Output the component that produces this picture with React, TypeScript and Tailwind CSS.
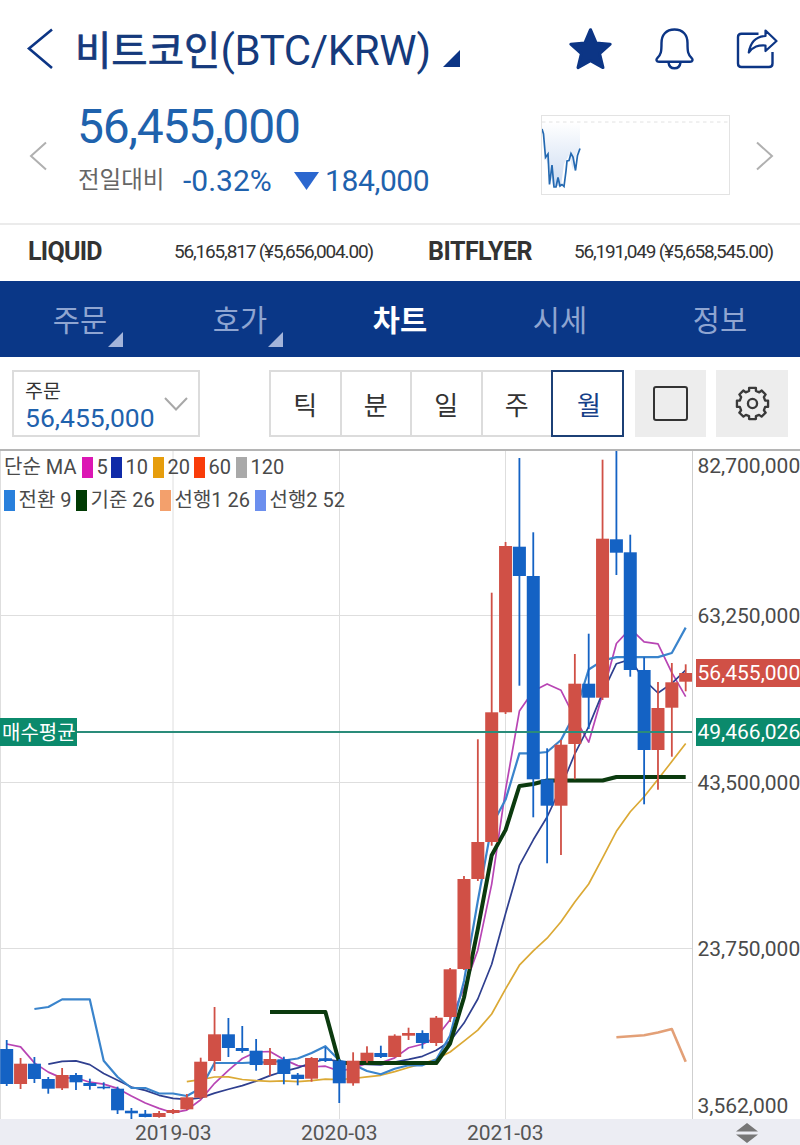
import { clsx } from 'clsx';

type Candle = { top: number; bottom: number; high: number; low: number; up: boolean };

const STEP = 13.857;
const FIRST_X = 6.7;
// months that sit left of the visible range but feed the indicators
const LEAD = 6;

// 1 = up (red), 0 = down (blue): [top, bottom, high, low, up]
const rows: [number, number, number, number, number][] = [
  [1104, 1110, 1090, 1113, 1],
  [1087, 1104, 1070, 1109, 1],
  [1049, 1087, 1040, 1092, 1],
  [999, 1049, 980, 1060, 1],
  [999, 1043, 905, 1060, 0],
  [1043, 1045, 1028, 1060, 0],
  [1049, 1084, 1040, 1086, 0],
  [1063.7, 1084, 1058, 1089, 1],
  [1063.7, 1079, 1057, 1083, 0],
  [1079, 1088.7, 1077, 1093.7, 0],
  [1075, 1088.3, 1068, 1090, 1],
  [1075, 1082.3, 1073, 1090, 0],
  [1083, 1086, 1078.7, 1089.7, 0],
  [1086.7, 1088.3, 1082.3, 1089.3, 0],
  [1088.7, 1110.3, 1086.7, 1114, 0],
  [1110.7, 1113.3, 1108, 1119, 0],
  [1113.7, 1117, 1110, 1117.3, 0],
  [1113, 1117, 1111, 1117.7, 1],
  [1110, 1113, 1109, 1114, 1],
  [1097.3, 1109.3, 1094, 1110, 1],
  [1061.7, 1097.7, 1057.7, 1099, 1],
  [1034.3, 1061, 1007, 1071, 1],
  [1034.3, 1048, 1018, 1057, 0],
  [1048, 1051, 1026, 1052.7, 0],
  [1050.7, 1065, 1039, 1070.7, 0],
  [1059, 1065, 1048, 1075.7, 1],
  [1059.3, 1074, 1056.7, 1084.3, 0],
  [1074.7, 1079, 1073, 1085.3, 0],
  [1058, 1078.7, 1057, 1081.7, 1],
  [1058.3, 1061, 1047.3, 1062, 0],
  [1060.7, 1083.3, 1059, 1103, 0],
  [1060.7, 1083.3, 1052.3, 1085.7, 1],
  [1052.7, 1061, 1046.3, 1062.7, 1],
  [1053, 1057, 1045.7, 1058, 0],
  [1035.7, 1057, 1034.3, 1057.3, 1],
  [1033, 1035.7, 1027.7, 1040, 1],
  [1033, 1043, 1030.3, 1048.7, 0],
  [1017.7, 1043, 1016, 1046, 1],
  [969.3, 1017, 968, 1022, 1],
  [879, 969, 876, 970, 1],
  [842, 879, 739.3, 881, 1],
  [712.3, 842, 592.7, 845.7, 1],
  [546, 712.3, 542, 714, 1],
  [546.7, 576, 458, 685.7, 0],
  [576, 779.3, 532.3, 817.3, 0],
  [779.3, 805.7, 748.3, 863.3, 0],
  [744.7, 805.7, 740, 855, 1],
  [683.7, 744, 654, 779.3, 1],
  [683.7, 697.7, 633.7, 729, 0],
  [538.7, 697.7, 459.7, 700, 1],
  [539.3, 552.7, 451, 575, 0],
  [552.3, 670, 534.7, 676.7, 0],
  [670, 750, 657.3, 804.3, 0],
  [708, 750, 682, 789.7, 1],
  [682.3, 707.7, 663, 756.7, 1],
  [673, 681.7, 664.3, 691.3, 1],
];

const candles: Candle[] = rows.map(([top, bottom, high, low, up]) => ({ top, bottom, high, low, up: up === 1 }));
const xAt = (i: number) => FIRST_X + (i - LEAD) * STEP;

type Point = { i: number; y: number };

function average(n: number): Point[] {
  return candles.flatMap((_, i) => {
    if (i < n - 1) return [];
    const sum = candles.slice(i - n + 1, i + 1).reduce((acc, c) => acc + (c.up ? c.top : c.bottom), 0);
    return [{ i, y: sum / n }];
  });
}

function midpoint(n: number): Point[] {
  return candles.flatMap((_, i) => {
    if (i < n - 1) return [];
    const part = candles.slice(i - n + 1, i + 1);
    return [{ i, y: (Math.min(...part.map((c) => c.high)) + Math.max(...part.map((c) => c.low))) / 2 }];
  });
}

const toPoints = (line: Point[]) =>
  line
    .filter((p) => p.i >= LEAD && p.i < candles.length)
    .map((p) => `${xAt(p.i).toFixed(1)},${p.y.toFixed(1)}`)
    .join(' ');

const conversion = midpoint(9);
const base = midpoint(26);
const leading = base.map((p) => ({
  i: p.i + 25,
  y: (p.y + (conversion.find((c) => c.i === p.i)?.y ?? p.y)) / 2,
}));

const lines = [
  { points: toPoints(average(5)), color: '#b845b4', width: 1.7 },
  { points: toPoints(average(10)), color: '#2f3f8f', width: 1.7 },
  { points: toPoints(average(20)), color: '#dba935', width: 1.7 },
  { points: toPoints(conversion), color: '#3a84cc', width: 2.2 },
  { points: toPoints(base), color: '#0b3a0e', width: 4 },
  { points: toPoints(leading), color: '#e3a077', width: 2.6 },
];

const averages = [
  { label: '5', color: 'bg-[#dc17b4]', width: 'w-[29px]' },
  { label: '10', color: 'bg-[#0f2aa8]', width: 'w-[42px]' },
  { label: '20', color: 'bg-[#e69d0c]', width: 'w-[41px]' },
  { label: '60', color: 'bg-[#f93c09]', width: 'w-[42px]' },
  { label: '120', color: 'bg-[#a9a9a9]', width: 'w-[52px]' },
];

const ichimoku = [
  { label: '전환 9', color: 'bg-[#2980dc]', width: 'w-[72px]' },
  { label: '기준 26', color: 'bg-[#003a03]', width: 'w-[84px]' },
  { label: '선행1 26', color: 'bg-[#f3a06c]', width: 'w-[95px]' },
  { label: '선행2 52', color: 'bg-[#6c8fee]', width: 'w-[92px]' },
];

const tabs = [
  { label: '주문', more: true },
  { label: '호가', more: true },
  { label: '차트', active: true },
  { label: '시세' },
  { label: '정보' },
];

const FONT = "font-[Roboto,'Noto_Sans_CJK_KR',sans-serif]";

function Header() {
  return (
    <header className="flex h-[98px] items-center text-[#0c3585]">
      <svg className="ml-[26px] h-[44px] w-[28px]" viewBox="0 0 28 44" fill="none" stroke="currentColor" strokeWidth="2.6">
        <path d="M26 2.5 3 21.5 26 41" />
      </svg>
      <h1 className="ml-[21px] flex w-[356px] items-center whitespace-nowrap pt-[3px] text-[#153a7c]">
        <span className="pt-[3px] text-[39.500px] leading-none [-webkit-text-stroke:0.7px]">비트코인</span>
        <span className="text-[42px] leading-none tracking-[-0.35px]">(BTC/KRW)</span>
      </h1>
      <svg className="ml-[11px] mt-[19px] size-[18px]" viewBox="0 0 18 18" fill="currentColor">
        <path d="M18 0V17H1Z" />
      </svg>
      <svg className="ml-[107px] h-[44px] w-[46px]" viewBox="0 0 46 44" fill="currentColor" stroke="currentColor" strokeWidth="3" strokeLinejoin="round">
        <path d="M23.5 2.7 29.2 16 43.2 17.2 32.6 26.5 36 40.6 23.5 33.6 11 40.6 14.4 26.5 3.8 17.2 17.8 16Z" />
      </svg>
      <svg className="ml-[41px] h-[44px] w-[42px]" viewBox="0 0 42 44" fill="none" stroke="currentColor" strokeWidth="2.4" strokeLinejoin="round">
        <path d="M20.500 2.500C12 2.500 7.500 8 7.500 16C7.500 25 7 27.500 3.500 30.800C1.500 32.700 2.500 34.800 5 34.800H36C38.500 34.800 39.500 32.700 37.500 30.800C34 27.500 33.500 25 33.500 16C33.500 8 29 2.500 20.500 2.500Z" />
        <path d="M14.500 35.500C15 39.500 17.500 41.300 20.500 41.300S26 39.500 26.500 35.500" />
      </svg>
      <svg className="ml-[37px] h-[44px] w-[46px]" viewBox="0 0 46 44" fill="none" stroke="currentColor" strokeWidth="2.4" strokeLinejoin="round">
        <path d="M25.500 6.700H8.500Q5 6.700 5 10V36.500Q5 40 8.500 40H36Q39.500 40 39.500 36.500V25" />
        <path d="M15.800 25.500C17.500 14.500 23 9.500 32.500 9V3.500L43.500 14 32.500 24V18.500C25 18 20.500 19.500 15.800 25.500Z" strokeWidth="2.2" />
      </svg>
    </header>
  );
}

function Price() {
  return (
    <section className="flex h-[125px] text-[#1f62ad]">
      <svg className="ml-[29px] mt-[43px] h-[30px] w-[18px]" viewBox="0 0 18 30" fill="none" stroke="#b0b0b0" strokeWidth="2">
        <path d="M17 1.500 2 15 17 28.500" />
      </svg>
      <div className="ml-[30px] w-[464px] pt-[4px]">
        <div className="text-[48px] leading-[50px] tracking-[-1.2px]">56,455,000</div>
        <div className="mt-[12px] flex h-[34px] items-center whitespace-nowrap">
          <span className="w-[105px] pl-px text-[23.500px] leading-none text-[#666]">전일대비</span>
          <span className="w-[112px] pl-px text-[30px] leading-none">-0.32%</span>
          <svg className="mr-[6px] h-[18px] w-[25px]" viewBox="0 0 25 18" fill="#2b67cf">
            <path d="M0 0H25L12.500 18Z" />
          </svg>
          <span className="text-[30px] leading-none tracking-[-0.4px]">184,000</span>
        </div>
      </div>
      <svg className="mt-[17px] h-[80px] w-[189px]" viewBox="0 0 189 80" fill="none">
        <defs>
          <linearGradient id="spark" x1="0" y1="0" x2="0" y2="1">
            <stop offset="0" stopColor="#ffffff" />
            <stop offset="1" stopColor="#cddcf2" />
          </linearGradient>
        </defs>
        <path d="M1 7H39V33L35 39 32 55 28 40 23 49 20 71H12L8 52 5 44 3 20 1 14Z" fill="url(#spark)" />
        <path d="M1 7H188" stroke="#e2e2e2" strokeDasharray="3.500 3.500" />
        <path d="M1 14 2.500 19 4.500 42.500 7 39 8.500 69.500 11 50 13 72 15 72 17 62.500 19 71 21 69.500 23 71.500 25 56 26 46 28 45.500 30 38.500 32 42 34.500 55.500 36.500 40.500 39 33.500" stroke="#2469b1" strokeWidth="1.700" />
        <rect x=".5" y=".5" width="188" height="79" stroke="#e3e3e3" />
      </svg>
      <svg className="ml-[26px] mt-[43px] h-[30px] w-[18px]" viewBox="0 0 18 30" fill="none" stroke="#b0b0b0" strokeWidth="2">
        <path d="M1 1.500 16 15 1 28.500" />
      </svg>
    </section>
  );
}

function Exchanges() {
  return (
    <section className="flex h-[58px] items-center whitespace-nowrap border-t-2 border-[#ebebeb] pb-[3px] pl-[28px] text-[#333]">
      <span className="w-[146px] text-[25px] font-bold leading-none tracking-[-0.7px]">LIQUID</span>
      <span className="w-[254px] text-[19px] leading-none tracking-[-1.17px]">56,165,817 (¥5,656,004.00)</span>
      <span className="w-[146px] text-[25px] font-bold leading-none tracking-[-0.5px]">BITFLYER</span>
      <span className="text-[19px] leading-none tracking-[-1.17px]">56,191,049 (¥5,658,545.00)</span>
    </section>
  );
}

function Tabs() {
  return (
    <nav className="grid h-[76px] grid-cols-5 bg-[#0a3787]">
      {tabs.map((tab) => (
        <div
          key={tab.label}
          className={clsx(
            'relative flex items-center justify-center pt-[5px] text-[29.500px] leading-none',
            tab.active ? 'font-bold text-white' : 'text-[#8fa5d1]',
          )}
        >
          {tab.label}
          {tab.more && (
            <svg className="absolute bottom-[10px] left-[108px] size-[15px]" viewBox="0 0 15 15" fill="#a3b4da">
              <path d="M15 0V15H0Z" />
            </svg>
          )}
        </div>
      ))}
    </nav>
  );
}

function Toolbar() {
  return (
    <section className="flex h-[92px] pl-[12px] pt-[13px]">
      <div className="flex h-[67px] w-[188px] items-center justify-between border-2 border-[#dcdcdc] pl-[11px] pr-[10px] pt-[3px]">
        <div>
          <div className="text-[19.500px] leading-[25px] text-[#333]">주문</div>
          <div className="text-[26.500px] leading-[28px] text-[#1f62ad]">56,455,000</div>
        </div>
        <svg className="mb-[2px] h-[14px] w-[24px]" viewBox="0 0 24 14" fill="none" stroke="#a8a8a8" strokeWidth="2">
          <path d="M1 1 12 12.500 23 1" />
        </svg>
      </div>
      <div className="ml-[69px] flex h-[67px] text-[26px] leading-none text-[#333]">
        {['틱', '분', '일', '주'].map((unit) => (
          <div key={unit} className="flex w-[70.500px] items-center justify-center border-y-2 border-l-2 border-[#dcdcdc] pt-[4px]">
            {unit}
          </div>
        ))}
        <div className="flex w-[73px] items-center justify-center border-2 border-[#1c4076] pl-[3px] pt-[4px] text-[#163f87]">월</div>
      </div>
      <div className="ml-[11px] flex h-[67px] w-[71px] items-center justify-center bg-[#ededed]">
        <div className="size-[35px] rounded-[3px] border-2 border-[#333]" />
      </div>
      <div className="ml-[10px] flex h-[67px] w-[72px] items-center justify-center bg-[#ededed]">
        <svg className="size-[35px]" viewBox="0 0 36 36" fill="none" stroke="#3a3a3a" strokeWidth="2.400" strokeLinejoin="round">
          <path d="M14.500 2H21.500V5L25 6.500 27.500 4.700 31.500 8.700 29.700 11.500 31 15H34V21.500H31L29.700 25 31.500 27.500 27.300 31.500 24.800 29.700 21.500 31V34H14.500V31L11.200 29.700 8.700 31.500 4.500 27.500 6.300 25 5 21.500H2V15H5L6.300 11.500 4.500 8.700 8.500 4.700 11 6.500 14.500 5Z" />
          <circle cx="18" cy="18" r="4.700" />
        </svg>
      </div>
    </section>
  );
}

function Legend({ items }: { items: typeof averages }) {
  return (
    <>
      {items.map((item) => (
        <div key={item.label} className={clsx('flex items-center gap-[4px]', item.width)}>
          <span className={clsx('h-[21px] w-[10.500px] shrink-0', item.color)} />
          <span>{item.label}</span>
        </div>
      ))}
    </>
  );
}

function Chart() {
  return (
    <section className="relative h-[670px] border-t-2 border-[#b5b5b5]">
      <svg className="block h-[668px] w-[800px]" viewBox="0 451 800 668">
        <defs>
          <clipPath id="plot">
            <rect x="0" y="451" width="692" height="668" />
          </clipPath>
        </defs>
        <g stroke="#dedede">
          {[615.5, 782.5, 948.5].map((y) => (
            <path key={y} d={`M0 ${y}H692`} />
          ))}
          {[0.5, 173, 339.5, 505.5].map((x) => (
            <path key={x} d={`M${x} 451V1119`} />
          ))}
        </g>
        <path d="M692.500 451V1119" stroke="#cfcfcf" />
        <g clipPath="url(#plot)">
          {lines.map((line) => (
            <polyline key={line.color} points={line.points} fill="none" stroke={line.color} strokeWidth={line.width} strokeLinejoin="round" />
          ))}
          {candles.map((c, i) => (
            <g key={i} fill={c.up ? '#d05046' : '#1462c4'}>
              <rect x={xAt(i) - 0.9} y={c.high} width="1.800" height={c.low - c.high} />
              <rect x={xAt(i) - 6.5} y={c.top} width="13" height={c.bottom - c.top} />
            </g>
          ))}
        </g>
        <path d="M76 732H692" stroke="#2a8c7a" strokeWidth="1.800" />
        <rect x="0" y="718" width="77" height="28" fill="#0b8a6c" />
        <rect x="696" y="659" width="104" height="28" fill="#d05046" />
        <rect x="696" y="718" width="104" height="28" fill="#0b8a6c" />
        <text x="2" y="739.500" fontSize="20" fill="#fff">매수평균</text>
        <g fontSize="21" fill="#4a4a4a">
          <text x="697.500" y="473">82,700,000</text>
          <text x="697.500" y="623">63,250,000</text>
          <text x="697.500" y="680" fill="#fff">56,455,000</text>
          <text x="697.500" y="739" fill="#fff">49,466,026</text>
          <text x="697.500" y="790">43,500,000</text>
          <text x="697.500" y="956">23,750,000</text>
          <text x="697.500" y="1112.500">3,562,000</text>
        </g>
      </svg>
      <div className="absolute left-[4px] top-[5px] flex flex-col gap-[12px] whitespace-nowrap text-[20px] leading-[21px] text-[#4a4a4a]">
        <div className="flex">
          <span className="w-[78px] pt-px">단순 MA</span>
          <Legend items={averages} />
        </div>
        <div className="flex">
          <Legend items={ichimoku} />
        </div>
      </div>
    </section>
  );
}

export default function App() {
  return (
    <main className={clsx('h-[1145px] w-[800px] overflow-hidden bg-white', FONT)}>
      <Header />
      <Price />
      <Exchanges />
      <Tabs />
      <Toolbar />
      <Chart />
      <footer className="flex h-[26px] items-center bg-[#ecedf3] pl-[135px] pt-[2px] text-[21px] leading-none text-[#555]">
        <span className="w-[166px]">2019-03</span>
        <span className="w-[166px]">2020-03</span>
        <span className="w-[269px]">2021-03</span>
        <svg className="h-[20px] w-[22px]" viewBox="0 0 22 20" fill="#777">
          <path d="M0 8.500 11 0 22 8.500ZM0 11.500H22L11 20Z" />
        </svg>
      </footer>
    </main>
  );
}
